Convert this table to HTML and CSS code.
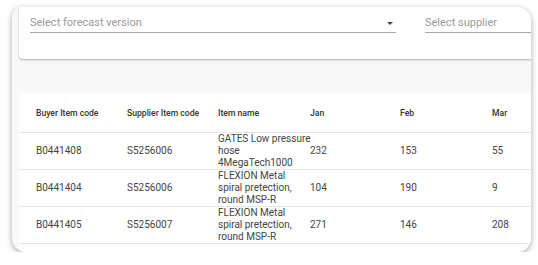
FILE: index.html
```html
<!DOCTYPE html>
<html lang="en">
<head>
    <meta charset="UTF-8">
    <meta name="viewport" content="width=device-width, initial-scale=1.0">
    <title>Forecast</title>
    <link rel="stylesheet" href="styles.css">
</head>
<body>
    <div class="frame">
        <!-- Filters -->
        <div class="filters">
            <div class="field field-version">
                <span class="placeholder">Select forecast version</span>
                <span class="arrow"></span>
            </div>
            <div class="field field-supplier">
                <span class="placeholder">Select supplier</span>
            </div>
        </div>
        <div class="spacer"></div>
        <!-- Forecast table -->
        <div class="table-panel">
            <table class="forecast">
                <colgroup>
                    <col class="col-buyer">
                    <col class="col-code">
                    <col class="col-name">
                    <col class="col-jan">
                    <col class="col-feb">
                    <col>
                </colgroup>
                <thead>
                    <tr>
                        <th>Buyer Item code</th>
                        <th>Supplier Item code</th>
                        <th>Item name</th>
                        <th>Jan</th>
                        <th>Feb</th>
                        <th>Mar</th>
                    </tr>
                </thead>
                <tbody>
                    <tr>
                        <td>B0441408</td>
                        <td>S5256006</td>
                        <td class="name">GATES Low pressure<br>hose<br>4MegaTech1000</td>
                        <td>232</td>
                        <td>153</td>
                        <td>55</td>
                    </tr>
                    <tr>
                        <td>B0441404</td>
                        <td>S5256006</td>
                        <td class="name">FLEXION Metal<br>spiral pretection,<br>round MSP-R</td>
                        <td>104</td>
                        <td>190</td>
                        <td>9</td>
                    </tr>
                    <tr>
                        <td>B0441405</td>
                        <td>S5256007</td>
                        <td class="name">FLEXION Metal<br>spiral pretection,<br>round MSP-R</td>
                        <td>271</td>
                        <td>146</td>
                        <td>208</td>
                    </tr>
                </tbody>
            </table>
        </div>
    </div>
</body>
</html>
```

FILE: styles.css
```css
body {
    font-family: Roboto, "Liberation Sans", sans-serif;
    margin: 0;
    padding: 0;
    background-color: #fff;
}
.frame {
    margin: 7px 0 0 12px;
    width: 519px;
    height: 245px;
    box-sizing: border-box;
    padding-left: 7px;
    background-color: #f8f8f8;
    border-radius: 10px 14px 14px 14px;
    box-shadow: 0 2px 6px rgba(0, 0, 0, 0.35);
    overflow: hidden;
    display: flex;
    flex-direction: column;
}
.filters {
    height: 52px;
    flex-shrink: 0;
    background-color: #fff;
    border-radius: 0 0 0 4px;
    box-shadow: 0 1px 2px rgba(0, 0, 0, 0.3);
    padding-left: 11px;
    display: flex;
    gap: 29px;
    position: relative;
}
.field {
    height: 26px;
    box-sizing: border-box;
    padding-top: 7px;
    border-bottom: 1px solid #a8a8a8;
    display: flex;
    align-items: center;
    justify-content: space-between;
}
.field-version {
    width: 366px;
    padding-right: 3px;
}
.field-supplier {
    flex: 1;
}
.placeholder {
    font-size: 11px;
    line-height: 16px;
    color: #9a9a9a;
}
.arrow {
    width: 0;
    height: 0;
    border-left: 3px solid transparent;
    border-right: 3px solid transparent;
    border-top: 3px solid #444;
    margin-top: 1px;
}
.spacer {
    height: 34px;
    flex-shrink: 0;
}
.table-panel {
    flex: 1;
    background-color: #fff;
}
.forecast {
    width: 100%;
    border-collapse: collapse;
    table-layout: fixed;
}
.col-buyer {
    width: 108px;
}
.col-code {
    width: 91px;
}
.col-name {
    width: 92px;
}
.col-jan {
    width: 90px;
}
.col-feb {
    width: 92px;
}
th, td {
    padding: 0;
    text-align: left;
    vertical-align: middle;
    border-bottom: 1px solid #e6e6e6;
}
th:first-child, td:first-child {
    padding-left: 17px;
}
th {
    height: 39px;
    font-size: 8.6px;
    font-weight: 500;
    color: #333;
}
td {
    height: 36px;
    font-size: 10px;
    line-height: 12px;
    color: #444;
}
td.name {
    white-space: nowrap;
}
```
